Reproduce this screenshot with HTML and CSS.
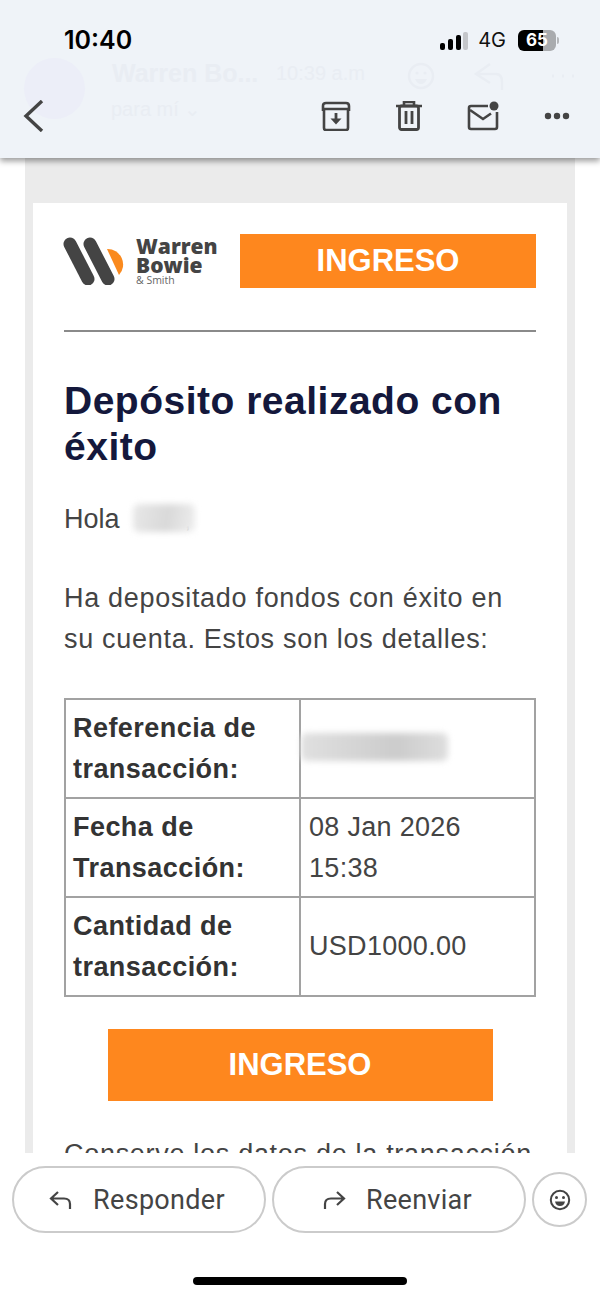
FILE: index.html
```html
<!DOCTYPE html>
<html lang="es">
<head>
<meta charset="UTF-8" />
<meta name="viewport" content="width=device-width, initial-scale=1" />
<title>Depósito realizado con éxito</title>
<link rel="stylesheet" href="styles.css">
</head>
<body>

<div class="screen">
  <header class="topbar">
    <!-- sender row scrolled under the translucent bar -->
    <div class="ghost">
      <div class="ghost-avatar"></div>
      <div class="ghost-name">Warren Bo...</div>
      <div class="ghost-time">10:39 a.m</div>
      <div class="ghost-to">para mí ⌄</div>
      <svg class="ghost-icons" width="172" height="32" viewBox="0 0 172 32">
        <circle cx="15" cy="16" r="12" fill="none" stroke="#e9edf3" stroke-width="2.5"/>
        <circle cx="11" cy="13" r="1.6" fill="#e9edf3"/>
        <circle cx="19" cy="13" r="1.6" fill="#e9edf3"/>
        <path d="M9 19 L21 19 Q19 24 15 24 Q11 24 9 19 Z" fill="#e9edf3"/>
        <path d="M84 4 L70 14 L84 23 M71 14 L90 14 Q96 14 96 22 L96 30" fill="none" stroke="#e9edf3" stroke-width="2.5"/>
        <path d="M146 16 L148 16 M156 16 L158 16 M166 16 L168 16" stroke="#e9edf3" stroke-width="3"/>
      </svg>
    </div>

    <div class="status">
      <span class="clock">10:40</span>
      <div class="status-right">
        <svg class="signal" width="28" height="18" viewBox="0 0 28 18">
          <rect x="0" y="11" width="5" height="7" rx="2" fill="#000"/>
          <rect x="8" y="7" width="5" height="11" rx="2" fill="#000"/>
          <rect x="16" y="3" width="5" height="15" rx="2" fill="#000"/>
          <rect x="23" y="0" width="5" height="18" rx="2" fill="#c4c6ca"/>
        </svg>
        <span class="net">4G</span>
        <div class="battery">
          <span class="battery-num">65</span>
          <span class="battery-tip"></span>
        </div>
      </div>
    </div>

    <div class="toolbar">
      <svg class="back" width="22" height="32" viewBox="0 0 22 32">
        <path d="M19 1 L3 16 L19 31" fill="none" stroke="#444" stroke-width="3.4"/>
      </svg>
      <div class="tools">
        <svg width="30" height="30" viewBox="0 0 30 30">
          <path d="M2 10 L2 5 Q2 2 5 2 L25 2 Q28 2 28 5 L28 10 M3 8 L27 8 M3 8 L3 27 Q3 29 5 29 L25 29 Q27 29 27 27 L27 8" fill="none" stroke="#444" stroke-width="2.6"/>
          <path d="M15 12 L15 20" stroke="#444" stroke-width="2.8"/>
          <path d="M9.5 17.5 L20.5 17.5 L15 23.5 Z" fill="#444"/>
        </svg>
        <svg width="26" height="30" viewBox="0 0 26 30">
          <path d="M0 5 L26 5 M8 4 L8 1 L18 1 L18 4" fill="none" stroke="#444" stroke-width="2.6"/>
          <rect x="3.5" y="5" width="19" height="23.5" rx="2" fill="none" stroke="#444" stroke-width="2.8"/>
          <path d="M10 10 L10 23 M16 10 L16 23" stroke="#444" stroke-width="2.8"/>
        </svg>
        <svg width="32" height="30" viewBox="0 0 32 30">
          <path d="M21 5 L4 5 Q2 5 2 7 L2 26 Q2 28 4 28 L28 28 Q30 28 30 26 L30 11" fill="none" stroke="#444" stroke-width="2.6"/>
          <path d="M3 9 L16 18 L24 12.5" fill="none" stroke="#444" stroke-width="2.6"/>
          <circle cx="27" cy="5" r="4.5" fill="#444"/>
        </svg>
        <svg width="26" height="8" viewBox="0 0 26 8">
          <circle cx="4" cy="4" r="3.2" fill="#444"/>
          <circle cx="13" cy="4" r="3.2" fill="#444"/>
          <circle cx="22" cy="4" r="3.2" fill="#444"/>
        </svg>
      </div>
    </div>
  </header>

  <main class="mail-scroll">
    <div class="mail-frame">
      <div class="mail">
        <div class="mail-head">
          <div class="logo">
            <svg width="67" height="48" viewBox="0 0 67 48">
              <path d="M7 7 L25 42" stroke="#444" stroke-width="13" stroke-linecap="round"/>
              <path d="M27 7 L45 42" stroke="#444" stroke-width="13" stroke-linecap="round"/>
              <path d="M44 12 A15.5 15.5 0 0 1 56 38 Z" fill="#fa8a1e"/>
            </svg>
            <div class="logo-text">
              <div class="logo-name">Warren</div>
              <div class="logo-name">Bowie</div>
              <div class="logo-sub">&amp; Smith</div>
            </div>
          </div>
          <div class="head-badge">INGRESO</div>
        </div>
        <hr class="rule">
        <h1 class="title">Depósito realizado con éxito</h1>
        <p class="greet">Hola <span class="smudge smudge-name"></span><span class="comma">,</span></p>
        <p class="intro">Ha depositado fondos con éxito en su cuenta. Estos son los detalles:</p>

        <table class="details">
          <tr>
            <th>Referencia de transacción:</th>
            <td><span class="smudge smudge-ref"></span></td>
          </tr>
          <tr>
            <th>Fecha de Transacción:</th>
            <td>08 Jan 2026 15:38</td>
          </tr>
          <tr>
            <th>Cantidad de transacción:</th>
            <td>USD1000.00</td>
          </tr>
        </table>

        <div class="cta">INGRESO</div>
        <p class="keep">Conserve los datos de la transacción para sus registros.</p>
      </div>
    </div>
  </main>

  <footer class="actions">
    <div class="action-row">
      <button class="pill">
        <svg width="24" height="20" viewBox="0 0 24 20">
          <path d="M9 2 L2 8.5 L9 15 M2.5 8.5 L15 8.5 Q21 8.5 21 14 L21 19" fill="none" stroke="#444" stroke-width="2.2"/>
        </svg>
        <span>Responder</span>
      </button>
      <button class="pill">
        <svg width="24" height="20" viewBox="0 0 24 20">
          <path d="M15 2 L22 8.5 L15 15 M21.5 8.5 L9 8.5 Q3 8.5 3 14 L3 19" fill="none" stroke="#444" stroke-width="2.2"/>
        </svg>
        <span>Reenviar</span>
      </button>
      <button class="emoji">
        <svg width="22" height="22" viewBox="0 0 22 22">
          <circle cx="11" cy="11" r="9.2" fill="none" stroke="#444" stroke-width="2"/>
          <circle cx="7.5" cy="8.5" r="1.5" fill="#444"/>
          <circle cx="14.5" cy="8.5" r="1.5" fill="#444"/>
          <path d="M6 12.5 L16 12.5 Q15 17 11 17 Q7 17 6 12.5 Z" fill="#444"/>
        </svg>
      </button>
    </div>
    <div class="home-bar"></div>
  </footer>
</div>

</body>
</html>
```

FILE: styles.css
```css
* {
  box-sizing: border-box;
}
body {
  margin: 0;
  background: #fff;
  font-family: "Liberation Sans", Arial, sans-serif;
  color: #444;
}
.screen {
  width: 600px;
  height: 1298px;
  display: flex;
  flex-direction: column;
  overflow: hidden;
}

/* top bar */
.topbar {
  position: relative;
  z-index: 2;
  height: 158px;
  flex: none;
  padding-top: 25px;
  background: #eff3f8;
  box-shadow: 0 3px 6px rgba(0, 0, 0, 0.4);
}
.status {
  position: relative;
  display: flex;
  justify-content: space-between;
  align-items: center;
  height: 30px;
  padding: 0 44px 0 64px;
}
.clock {
  font-family: Inter, "Liberation Sans", sans-serif;
  font-size: 25px;
  font-weight: 600;
  color: #000;
}
.status-right {
  display: flex;
  align-items: center;
  gap: 12px;
}
.signal {
  margin-top: 2px;
  margin-right: -2px;
}
.net {
  font-family: Inter, "Liberation Sans", sans-serif;
  font-size: 20px;
  color: #111;
}
.battery {
  position: relative;
  width: 38px;
  height: 21px;
  border-radius: 6px;
  background: linear-gradient(90deg, #000 65%, #a9abae 65%);
  text-align: center;
  line-height: 21px;
}
.battery-num {
  font-family: Inter, "Liberation Sans", sans-serif;
  font-size: 17px;
  font-weight: 700;
  color: #fff;
}
.battery-tip {
  position: absolute;
  right: -3px;
  top: 7px;
  width: 2px;
  height: 7px;
  border-radius: 0 2px 2px 0;
  background: #b5b7ba;
}
.toolbar {
  position: relative;
  display: flex;
  justify-content: space-between;
  align-items: center;
  height: 40px;
  margin-top: 41px;
  padding: 0 30px 0 23px;
}
.tools {
  display: flex;
  align-items: center;
  gap: 45px;
}

/* sender row, barely visible through the bar */
.ghost {
  position: absolute;
  inset: 0;
  color: #e9edf3;
  font-size: 25px;
}
.ghost-avatar {
  position: absolute;
  left: 24px;
  top: 58px;
  width: 61px;
  height: 61px;
  border-radius: 50%;
  background: #eceef8;
}
.ghost-name {
  position: absolute;
  left: 112px;
  top: 59px;
  font-weight: 700;
}
.ghost-time {
  position: absolute;
  left: 276px;
  top: 62px;
  font-size: 20px;
}
.ghost-to {
  position: absolute;
  left: 111px;
  top: 97px;
  font-size: 20px;
}
.ghost-icons {
  position: absolute;
  left: 406px;
  top: 60px;
}

/* mail body */
.mail-scroll {
  flex: none;
  height: 995px;
  overflow: hidden;
  padding: 0 25px 0 25px;
}
.mail-frame {
  background: #ebebeb;
  padding: 45px 8px 0 8px;
}
.mail {
  background: #fff;
  padding: 31px 31px 40px 31px;
}
.mail-head {
  display: flex;
  justify-content: space-between;
  align-items: center;
  height: 54px;
}
.logo {
  display: flex;
  align-items: center;
  margin-left: -1px;
}
.logo-text {
  margin-left: 6px;
  color: #444;
  font-family: "Open Sans", "Liberation Sans", sans-serif;
}
.logo-name {
  font-size: 21px;
  font-weight: 800;
  line-height: 19px;
}
.logo-sub {
  margin-top: 1px;
  font-size: 10.5px;
  line-height: 9px;
  color: #666;
}
.head-badge {
  width: 296px;
  height: 54px;
  background: #fe871e;
  color: #fff;
  font-size: 31px;
  font-weight: 700;
  text-align: center;
  line-height: 54px;
}
.rule {
  margin: 42px 0 0 0;
  border: none;
  border-top: 2px solid #8a8a8a;
}
.title {
  margin: 46px 0 0 0;
  color: #14183c;
  font-size: 39px;
  line-height: 46px;
  font-weight: 700;
  letter-spacing: 0.5px;
}
.greet {
  margin: 29px 0 0 0;
  font-size: 27px;
  line-height: 40px;
  height: 40px;
}
.intro {
  margin: 39px 0 0 0;
  font-size: 27px;
  line-height: 41px;
  letter-spacing: 0.7px;
}
.smudge {
  display: inline-block;
  filter: blur(3px);
}
.smudge-name {
  width: 62px;
  height: 28px;
  margin-left: 6px;
  vertical-align: -4px;
  border-radius: 6px;
  background: linear-gradient(100deg, #e8e8e8, #d9d9d9 55%, #eeeeee);
}
.comma {
  margin-left: -10px;
  color: #b5b5b5;
  font-size: 20px;
}
.smudge-ref {
  width: 147px;
  height: 28px;
  margin-left: -8px;
  vertical-align: -4px;
  border-radius: 6px;
  background: linear-gradient(90deg, #e0e0e0, #cccccc 65%, #dedede);
}
.details {
  width: 472px;
  margin-top: 38px;
  border-collapse: collapse;
  table-layout: fixed;
}
.details th,
.details td {
  border: 2px solid #a2a2a2;
  height: 99px;
  padding: 0 8px;
  font-size: 27px;
  line-height: 41px;
  text-align: left;
}
.details th {
  width: 235px;
  padding-left: 7px;
  font-weight: 700;
  color: #333;
  letter-spacing: 0.45px;
}
.details td {
  font-weight: 400;
  letter-spacing: 0.3px;
}
.cta {
  width: 385px;
  height: 72px;
  margin: 32px auto 0 auto;
  background: #fe871e;
  color: #fff;
  font-size: 31px;
  font-weight: 700;
  text-align: center;
  line-height: 72px;
}
.keep {
  margin: 32px 0 0 0;
  font-size: 27px;
  line-height: 42px;
  letter-spacing: 0.7px;
}

/* bottom actions */
.actions {
  flex: 1;
  background: #fff;
}
.action-row {
  display: flex;
  align-items: center;
  gap: 6px;
  padding: 13px 0 0 12px;
}
.pill {
  display: flex;
  align-items: center;
  justify-content: center;
  gap: 20px;
  width: 254px;
  height: 67px;
  padding: 0 10px 0 6px;
  border: 2px solid #cbcbcb;
  border-radius: 34px;
  background: #fff;
  color: #444;
  font-family: Roboto, "Liberation Sans", sans-serif;
  font-size: 27px;
  font-weight: 400;
  letter-spacing: 0.3px;
}
.emoji {
  display: flex;
  align-items: center;
  justify-content: center;
  width: 55px;
  height: 55px;
  padding: 0;
  border: 2px solid #cbcbcb;
  border-radius: 50%;
  background: #fff;
}
.home-bar {
  width: 214px;
  height: 8px;
  margin: 44px auto 0 auto;
  border-radius: 4px;
  background: #000;
}
```
